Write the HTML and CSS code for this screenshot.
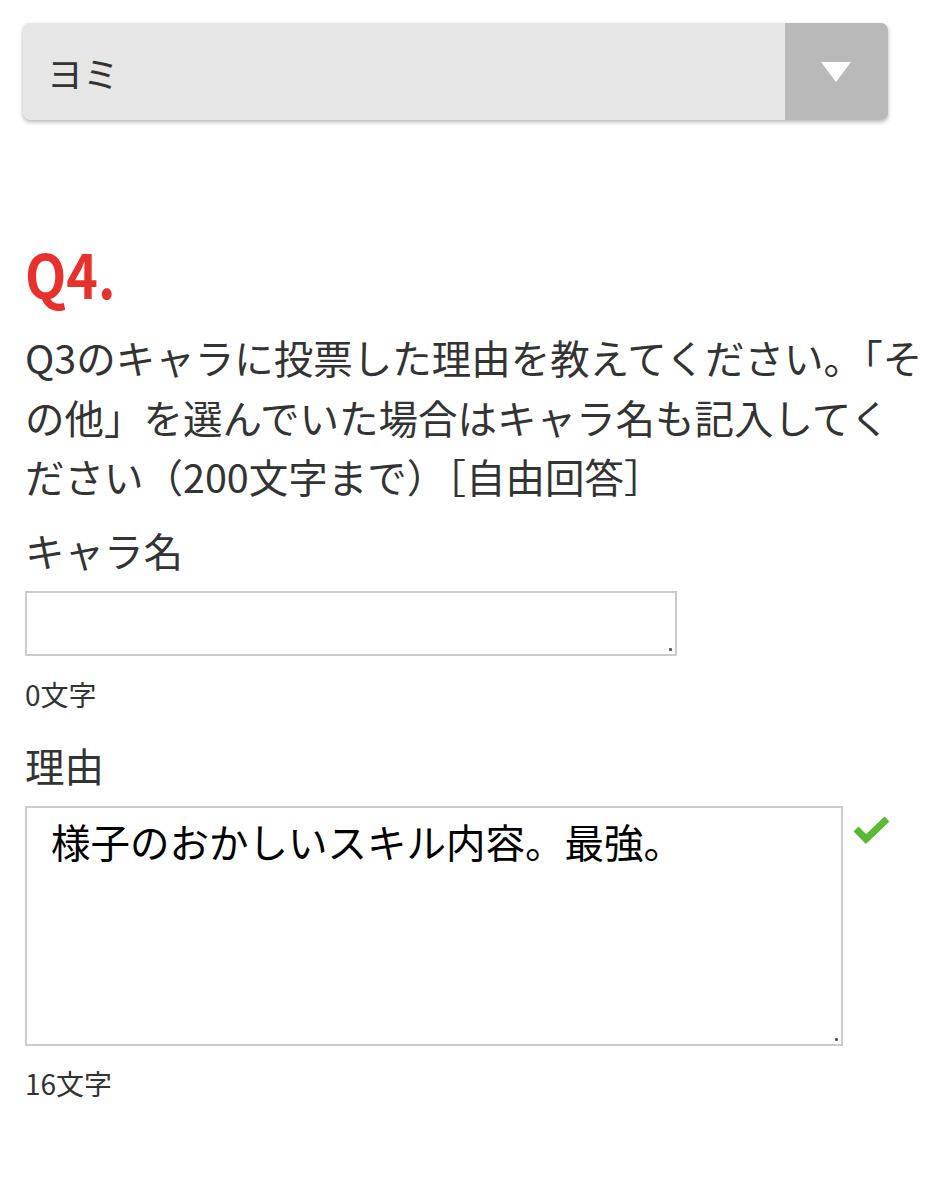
FILE: index.html
```html
<!DOCTYPE html>
<html lang="ja">
<head>
<meta charset="utf-8">
<title>Q4</title>
<link rel="stylesheet" href="styles.css">
</head>
<body>
<main class="page">
  <div class="select">
    <span class="select-value">ヨミ</span>
    <span class="select-btn">
      <svg class="select-arrow" width="30" height="20" viewBox="0 0 30 20"><polygon points="0,0 30,0 15,20" fill="#fff"/></svg>
    </span>
  </div>

  <h2 class="qnum"><span class="qnum-text">Q4.</span></h2>
  <p class="qtext">Q3のキャラに投票した理由を教えてください。「その他」を選んでいた場合はキャラ名も記入してく<br>ださい（200文字まで）［自由回答］</p>

  <label class="field-label" for="chara">キャラ名</label>
  <div class="input-wrap input-short">
    <textarea id="chara" class="field field-short"></textarea>
  </div>
  <div class="count">0文字</div>

  <label class="field-label field-label-2" for="reason">理由</label>
  <div class="row">
    <div class="input-wrap input-long">
      <textarea id="reason" class="field field-long">様子のおかしいスキル内容。最強。</textarea>
    </div>
    <svg class="check" width="38" height="30" viewBox="0 0 38 30"><polyline points="3,14 13,24 34,4" fill="none" stroke="#58b932" stroke-width="7" stroke-linejoin="miter"/></svg>
  </div>
  <div class="count count-2">16文字</div>
</main>
</body>
</html>
```

FILE: styles.css
```css
* { box-sizing: border-box; }
html, body { margin: 0; padding: 0; background: #fff; }
body {
  font-family: "Noto Sans CJK JP", "Noto Sans", sans-serif;
  color: #333;
}
.page {
  width: 948px;
  padding: 23px 25px 60px 25px;
}
.select {
  display: flex;
  width: 865px;
  height: 97px;
  margin-left: -2px;
  background: #e6e6e6;
  border-radius: 7px;
  box-shadow: 0 2px 4px rgba(0,0,0,0.3);
  overflow: hidden;
}
.select-value {
  flex: 1;
  display: flex;
  align-items: center;
  padding-left: 24px;
  font-size: 36px;
  color: #333;
}
.select-btn {
  width: 103px;
  background: #b9b9b9;
  display: flex;
  align-items: center;
  justify-content: center;
}
.select-arrow { display: block; margin-left: -2px; }

.qnum {
  margin: 118px 0 0;
  font-size: 61px;
  line-height: 70px;
  font-weight: 700;
  color: #e8312c;
}
.qnum-text {
  display: inline-block;
  transform: scaleX(0.88);
  transform-origin: left center;
}
.qtext {
  margin: 19px 0 0;
  font-size: 39.5px;
  line-height: 59.5px;
  color: #333;
}
.field-label {
  display: block;
  margin-top: 14px;
  font-size: 39.5px;
  line-height: 59.5px;
  color: #333;
}
.field-label-2 { margin-top: 20px; }

.input-wrap { position: relative; }
.input-wrap::after {
  content: "";
  position: absolute;
  right: 5px;
  bottom: 5px;
  width: 3px;
  height: 3px;
  border-radius: 1px;
  background: #555;
}
.input-short { width: 652px; margin-top: 12px; }
.input-long { width: 818px; }
.field {
  display: block;
  width: 100%;
  margin: 0;
  border: 2px solid #cbcbcb;
  border-radius: 0;
  background: #fff;
  resize: none;
  outline: none;
  font-family: "Noto Sans CJK JP", "Noto Sans", sans-serif;
  font-size: 39.5px;
  line-height: 1.5;
  color: #000;
  padding: 3px 24px;
  overflow: hidden;
}
.field-short { height: 65px; }
.field-long { height: 240px; }

.row {
  display: flex;
  align-items: flex-start;
  gap: 10px;
  margin-top: 11px;
}
.check { display: block; margin-top: 9px; }

.count {
  margin-top: 17px;
  font-size: 28px;
  line-height: 42px;
  color: #333;
}
.count-2 { margin-top: 16px; }
```
